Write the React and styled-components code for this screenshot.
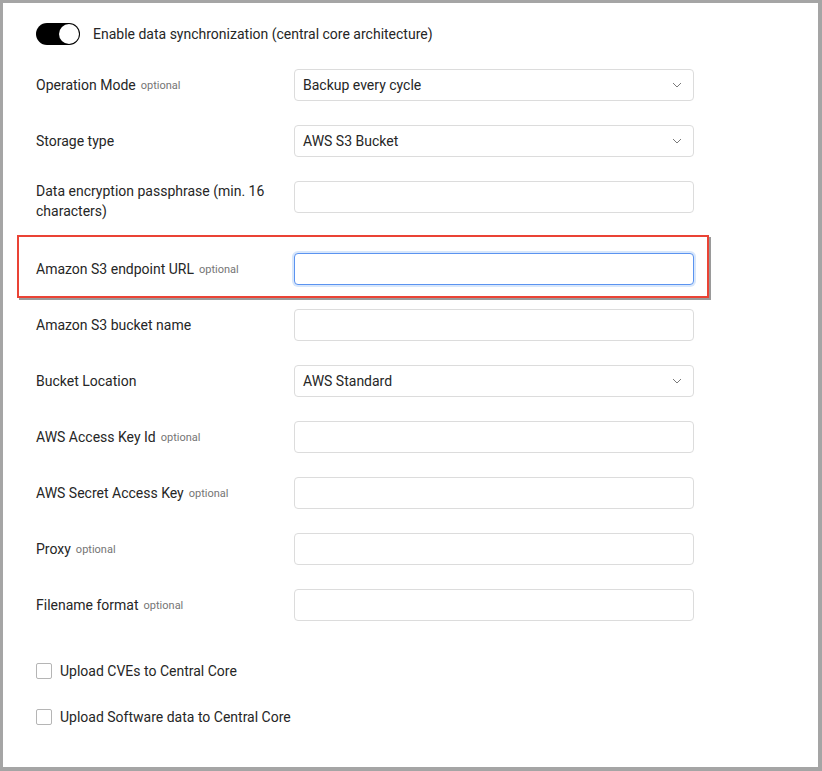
import React from "react";
import styled, { createGlobalStyle } from "styled-components";

const Global = createGlobalStyle`
  html, body { margin: 0; padding: 0; background: #a5a5a5; }
  body { font-family: Roboto, "Liberation Sans", Arial, sans-serif; }
  * { box-sizing: border-box; }
`;

const Frame = styled.div`
  width: 822px;
  height: 771px;
  padding: 3px 4px 4px 3px;
`;

const Panel = styled.div`
  background: #fff;
  height: 100%;
  padding: 20px 33px 0 33px;
  display: flex;
  flex-direction: column;
  align-items: flex-start;
  gap: 24px;
  color: #262626;
  font-size: 14px;
  line-height: 20px;
`;

const ToggleRow = styled.label`
  display: flex;
  align-items: center;
  gap: 13px;
  height: 22px;
`;

const Toggle = styled.span`
  position: relative;
  width: 44px;
  height: 22px;
  border-radius: 11px;
  background: ${(p) => (p.$on ? "#000" : "#ccc")};
  flex: none;
  &::after {
    content: "";
    position: absolute;
    top: 1px;
    left: ${(p) => (p.$on ? "23px" : "1px")};
    width: 20px;
    height: 20px;
    border-radius: 50%;
    background: #fff;
  }
`;

const Row = styled.div`
  position: relative;
  display: grid;
  grid-template-columns: 258px 400px;
  align-items: start;
  margin-top: ${(p) => (p.$extraTop ? "8px" : "0")};
  ${(p) =>
    p.$highlight &&
    `
    &::after {
      content: "";
      position: absolute;
      top: -18px;
      left: -19px;
      right: -15px;
      bottom: -13px;
      border: 2px solid #ea4335;
      box-shadow: 2px 2px 0 #9a9a9a;
      pointer-events: none;
    }
  `}
`;

const Label = styled.div`
  min-height: 32px;
  display: flex;
  align-items: center;
  padding-right: 12px;
`;

const LabelText = styled.span``;

const Optional = styled.span`
  font-size: 11px;
  color: #757575;
  margin-left: 5px;
  vertical-align: 1px;
`;

const Field = styled.div`
  height: 32px;
  border: 1px solid ${(p) => (p.$focused ? "#5b93f0" : "#dcdcdc")};
  border-radius: 4px;
  background: #fff;
  display: flex;
  align-items: center;
  justify-content: space-between;
  padding: 0 11px 0 8px;
  box-shadow: ${(p) => (p.$focused ? "0 0 0 2px #d8e7fb" : "none")};
`;

const Chevron = () => (
  <svg width="10" height="6" viewBox="0 0 10 6" fill="none">
    <path d="M1 1l4 4 4-4" stroke="#7a7a7a" strokeWidth="1" />
  </svg>
);

const Checks = styled.div`
  margin-top: 16px;
  display: flex;
  flex-direction: column;
  gap: 26px;
`;

const CheckRow = styled.label`
  display: flex;
  align-items: center;
  gap: 8px;
  height: 20px;
`;

const Box = styled.span`
  width: 16px;
  height: 16px;
  border: 1px solid #b5b5b5;
  border-radius: 2px;
  background: #fff;
  flex: none;
`;

const rows = [
  { label: "Operation Mode", optional: true, select: "Backup every cycle" },
  { label: "Storage type", select: "AWS S3 Bucket" },
  { label: "Data encryption passphrase (min. 16 characters)" },
  { label: "Amazon S3 endpoint URL", optional: true, focused: true, highlight: true, extraTop: true },
  { label: "Amazon S3 bucket name" },
  { label: "Bucket Location", select: "AWS Standard" },
  { label: "AWS Access Key Id", optional: true },
  { label: "AWS Secret Access Key", optional: true },
  { label: "Proxy", optional: true },
  { label: "Filename format", optional: true },
];

export default function App() {
  return (
    <Frame>
      <Global />
      <Panel>
        <ToggleRow>
          <Toggle $on />
          <span>Enable data synchronization (central core architecture)</span>
        </ToggleRow>
        {rows.map((r) => (
          <Row key={r.label} $highlight={r.highlight} $extraTop={r.extraTop}>
            <Label>
              <LabelText>
                {r.label}
                {r.optional && <Optional>optional</Optional>}
              </LabelText>
            </Label>
            <Field $focused={r.focused}>
              {r.select && (
                <>
                  <span>{r.select}</span>
                  <Chevron />
                </>
              )}
            </Field>
          </Row>
        ))}
        <Checks>
          <CheckRow>
            <Box />
            <span>Upload CVEs to Central Core</span>
          </CheckRow>
          <CheckRow>
            <Box />
            <span>Upload Software data to Central Core</span>
          </CheckRow>
        </Checks>
      </Panel>
    </Frame>
  );
}
